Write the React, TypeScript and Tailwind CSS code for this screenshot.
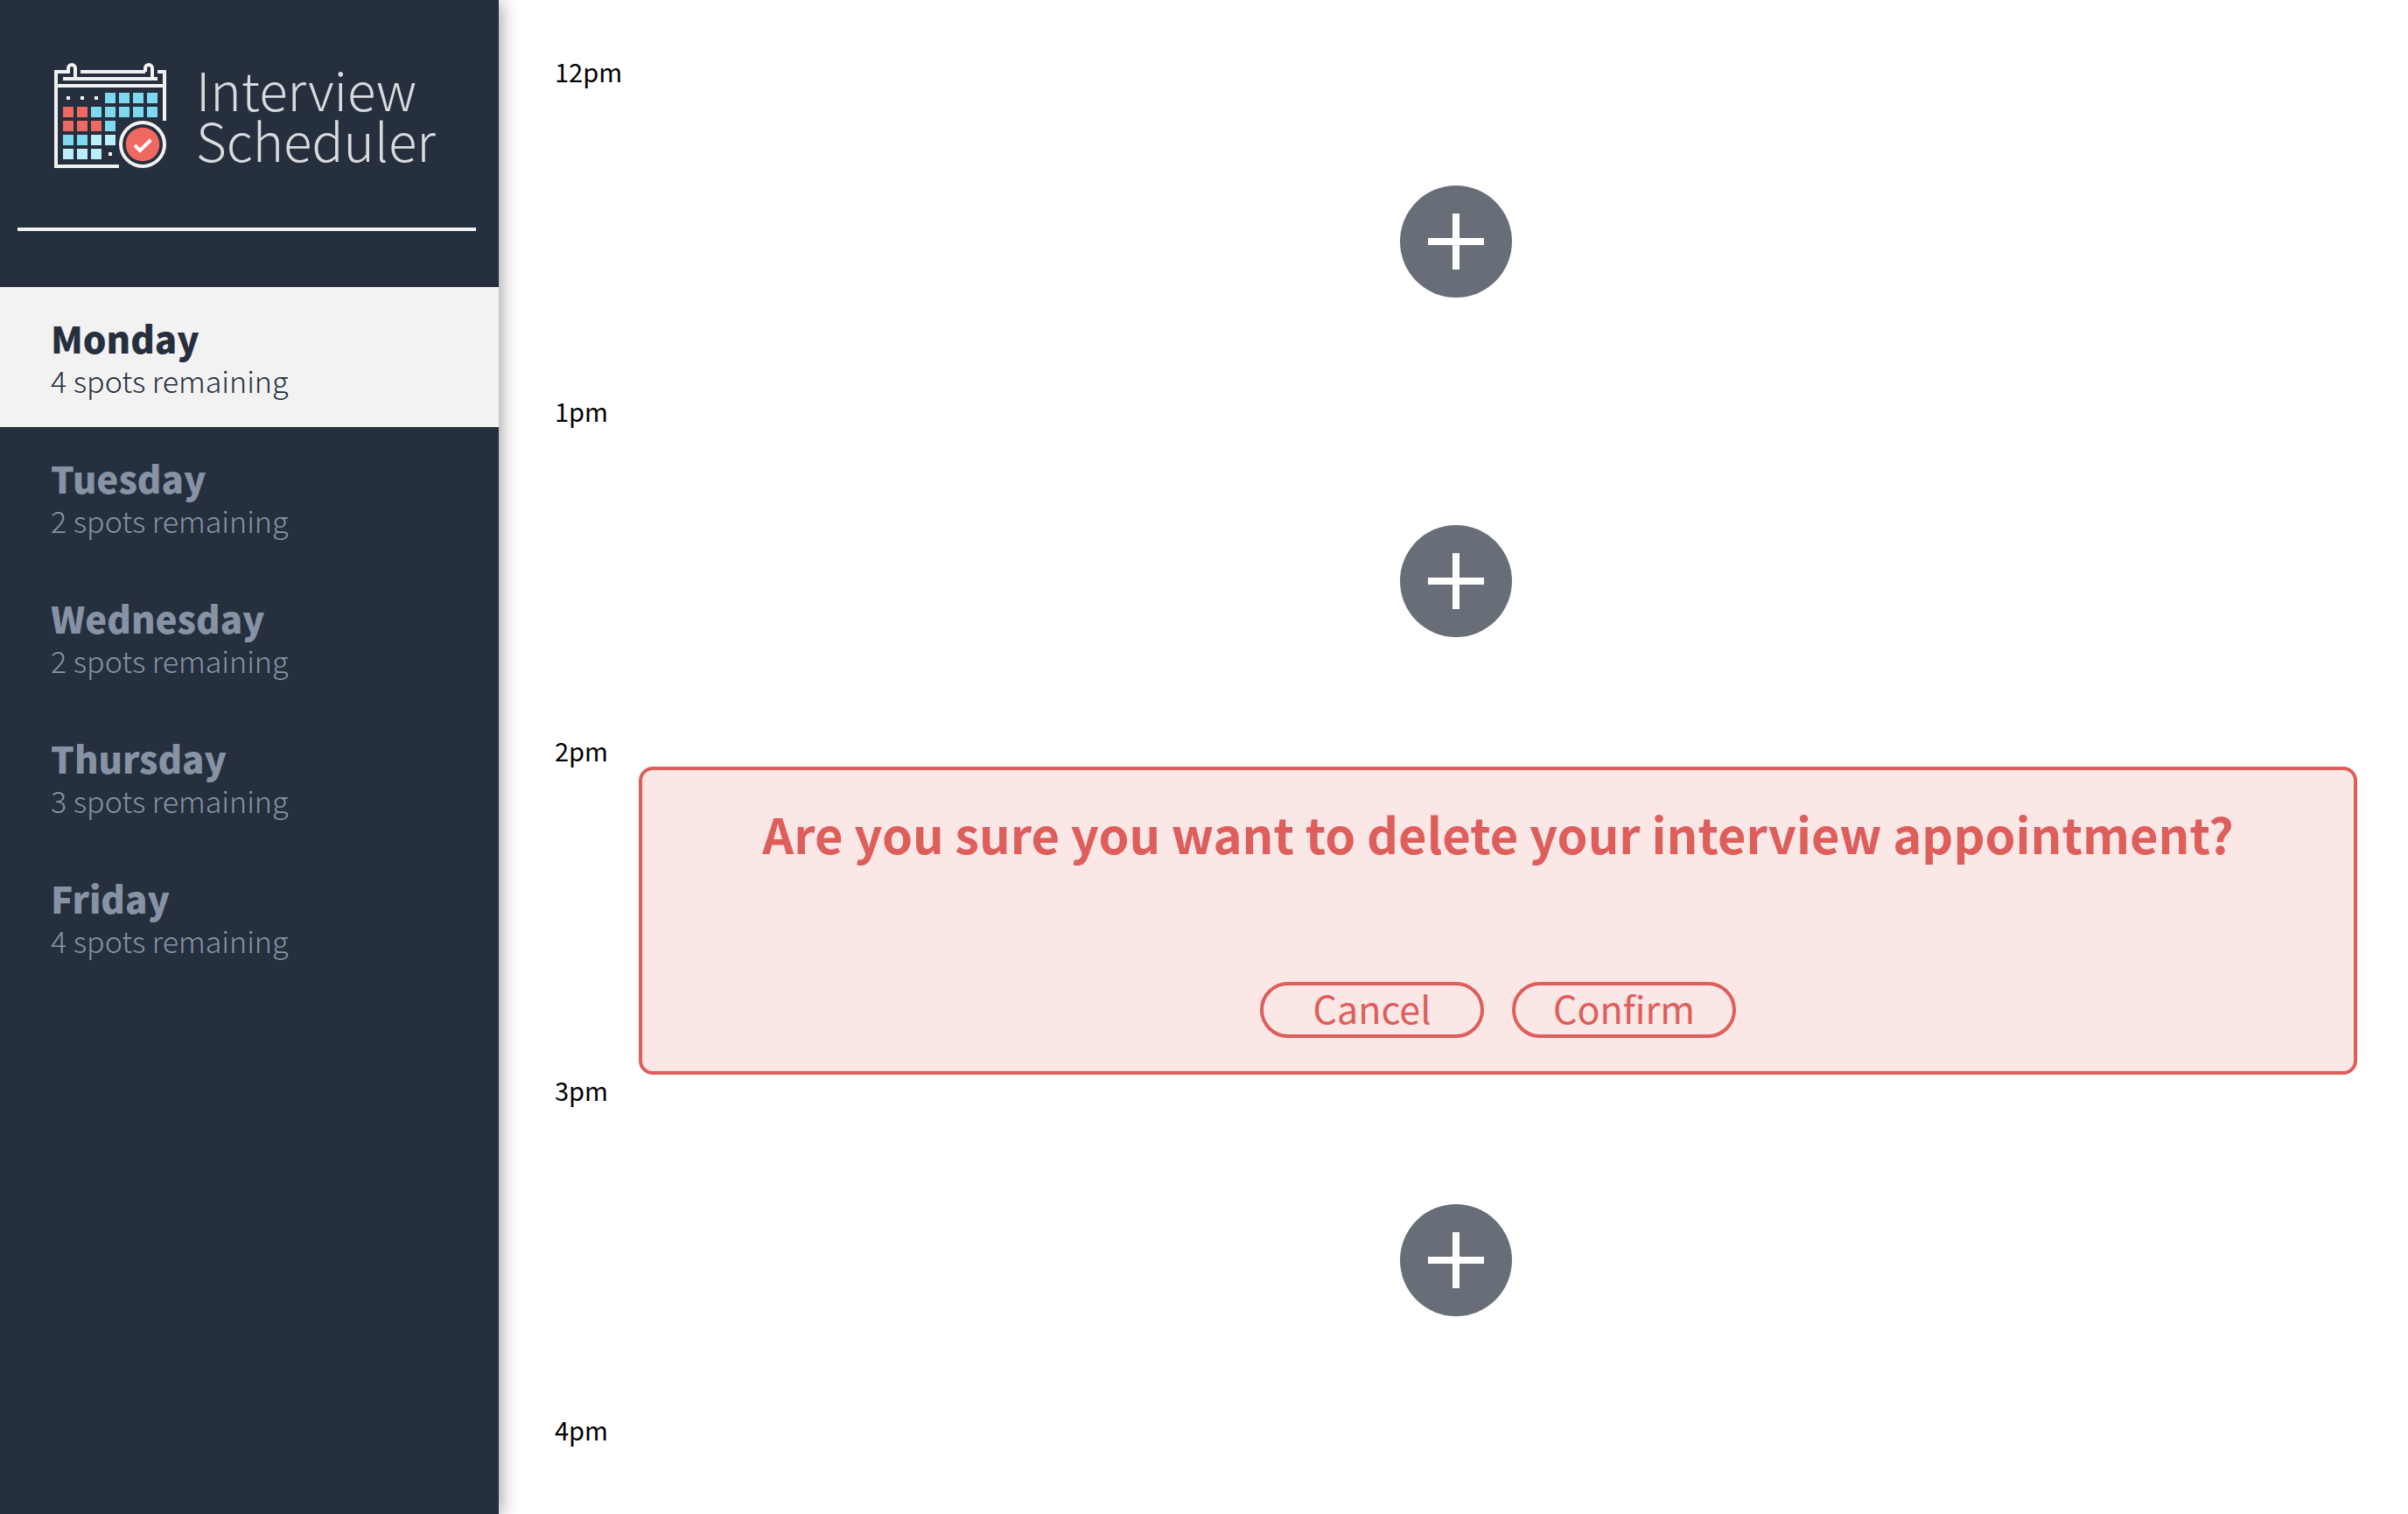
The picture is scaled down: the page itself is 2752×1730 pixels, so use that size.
const days = [
  { name: "Monday", spots: "4 spots remaining", selected: true },
  { name: "Tuesday", spots: "2 spots remaining", selected: false },
  { name: "Wednesday", spots: "2 spots remaining", selected: false },
  { name: "Thursday", spots: "3 spots remaining", selected: false },
  { name: "Friday", spots: "4 spots remaining", selected: false },
];

const slots: { time: string; state: "empty" | "confirm" | "last" }[] = [
  { time: "12pm", state: "empty" },
  { time: "1pm", state: "empty" },
  { time: "2pm", state: "confirm" },
  { time: "3pm", state: "empty" },
  { time: "4pm", state: "last" },
];

const BLUE = "#7dd8f0";
const PALE = "#baeef8";
const RED = "#ef6861";

// One entry per calendar cell: column, row, colour.
const cells: [number, number, string][] = [
  [3, 0, BLUE], [4, 0, BLUE], [5, 0, BLUE], [6, 0, BLUE],
  [0, 1, RED], [1, 1, RED], [2, 1, BLUE], [3, 1, BLUE], [4, 1, BLUE], [5, 1, BLUE], [6, 1, BLUE],
  [0, 2, RED], [1, 2, RED], [2, 2, RED], [3, 2, BLUE],
  [0, 3, BLUE], [1, 3, BLUE], [2, 3, PALE], [3, 3, PALE],
  [0, 4, PALE], [1, 4, PALE], [2, 4, PALE],
];

function CalendarLogo() {
  return (
    <svg viewBox="66 66 384 360" className="h-[120px] w-32 shrink-0" fill="none" aria-hidden="true">
      <g stroke="#f2f2f2" strokeWidth="12">
        <path d="M120 96H72V420H288" />
        <path d="M156 96H378" />
        <path d="M420 96H444V264" />
        <path d="M96 120H420" />
        <path d="M72 144H444" />
        <path d="M114 96V84a12 12 0 0 1 24 0V120" />
        <path d="M378 96V84a12 12 0 0 1 24 0V120" />
        <circle cx="369" cy="345" r="75" />
      </g>
      <g fill="#f2f2f2">
        <rect x="108" y="180" width="12" height="12" />
        <rect x="156" y="180" width="12" height="12" />
        <rect x="204" y="180" width="12" height="12" />
        <rect x="252" y="372" width="12" height="12" />
      </g>
      {cells.map(([col, row, color]) => (
        <rect key={`${col}-${row}`} x={96 + col * 48} y={168 + row * 48} width="36" height="36" fill={color} />
      ))}
      <circle cx="369" cy="345" r="58" fill={RED} />
      <path d="M342 348L360 366L397 330" stroke="#ffffff" strokeWidth="12" />
    </svg>
  );
}

function AddButton() {
  return (
    <button
      type="button"
      aria-label="Add appointment"
      className="flex size-32 items-center justify-center rounded-full bg-[#686e78]"
    >
      <svg viewBox="0 0 64 64" className="size-16" aria-hidden="true">
        <path d="M32 0V64M0 32H64" stroke="#ffffff" strokeWidth="8" />
      </svg>
    </button>
  );
}

function ConfirmCard() {
  return (
    <section className="ml-24 flex h-full flex-1 flex-col items-center justify-between rounded-2xl border-4 border-[#dd5e5b] bg-[#fbe7e6] pt-[30px] pb-[38px] text-[#dd5e5b]">
      <h1 className="text-center text-[56px] leading-[84px] font-bold">
        Are you sure you want to delete your interview appointment?
      </h1>
      <div className="flex gap-8">
        {["Cancel", "Confirm"].map((label) => (
          <button
            key={label}
            type="button"
            className="flex h-16 w-64 items-center justify-center rounded-full border-4 border-[#dd5e5b] pb-1.5 text-[43px] leading-none"
          >
            {label}
          </button>
        ))}
      </div>
    </section>
  );
}

export default function App() {
  return (
    <div className="flex min-h-screen bg-white font-['Noto_Sans_CJK_JP',sans-serif]">
      <aside className="w-[570px] shrink-0 bg-[#262f3e] shadow-[2px_2px_20px_0_rgba(0,0,0,0.4)]">
        <div className="flex h-[260px] items-start gap-[34px] pt-[72px] pl-[62px]">
          <CalendarLogo />
          <div className="text-[60px] leading-[58px] font-light text-[#d9dbde]">
            <div>Interview</div>
            <div>Scheduler</div>
          </div>
        </div>
        <hr className="mr-[26px] mb-16 ml-5 border-0 border-t-4 border-[#f2f2f2]" />
        <nav>
          <ul>
            {days.map((day) => (
              <li key={day.name}>
                <button
                  type="button"
                  className={
                    day.selected
                      ? "flex h-40 w-full flex-col justify-center bg-[#f2f2f2] px-[58px] pt-1 text-left text-[#262f3e]"
                      : "flex h-40 w-full flex-col justify-center px-[58px] pt-1 text-left text-[#8793a5]"
                  }
                >
                  <span className="text-[42px] leading-[50px] font-black">{day.name}</span>
                  <span className="text-[34px] leading-[48px] font-light">{day.spots}</span>
                </button>
              </li>
            ))}
          </ul>
        </nav>
      </aside>
      <main className="min-w-0 flex-1 pt-16 pr-[58px] pl-16">
        {slots.map((slot) => (
          <article key={slot.time}>
            <h4 className="h-9 text-[29px] leading-[34px] text-black">{slot.time}</h4>
            {slot.state !== "last" && (
              <div className="flex h-[352px] items-center justify-center">
                {slot.state === "confirm" ? <ConfirmCard /> : <AddButton />}
              </div>
            )}
          </article>
        ))}
      </main>
    </div>
  );
}
